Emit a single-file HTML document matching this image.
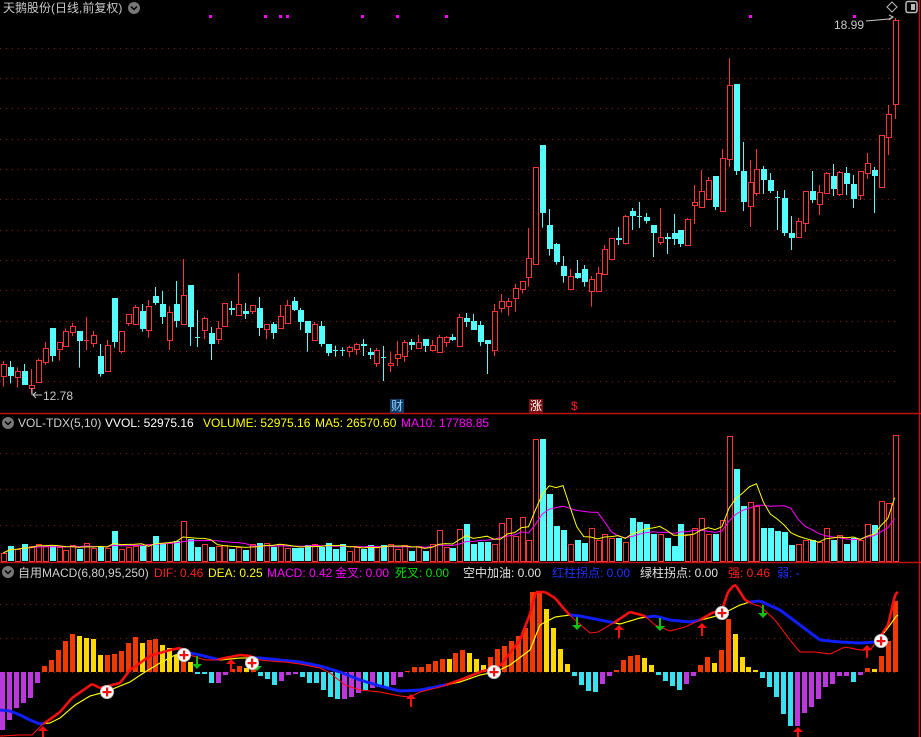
<!DOCTYPE html>
<html><head><meta charset="utf-8">
<style>
html,body{margin:0;padding:0;background:#000;width:921px;height:737px;overflow:hidden}
body{position:relative;font-family:"Liberation Sans","Noto Sans CJK SC",sans-serif;font-size:12px}
svg{position:absolute;left:0;top:0}
.t{position:absolute;white-space:nowrap;line-height:14px;font-size:12px}
</style></head><body>
<svg id="s" width="921" height="737" xmlns="http://www.w3.org/2000/svg"></svg>
<div class="t" style="left:3px;top:1px;color:#c8c8c8;font-size:12px">天鹅股份(日线,前复权)</div>
<div class="t" style="left:834px;top:18px;color:#c8c8c8">18.99</div>
<div class="t" style="left:43px;top:389px;color:#c8c8c8">12.78</div>
<div class="t" style="left:18px;top:416px;color:#d0d0d0">VOL-TDX(5,10)</div>
<div class="t" style="left:105px;top:416px;color:#fff">VVOL: 52975.16</div>
<div class="t" style="left:203px;top:416px;color:#ffff00">VOLUME: 52975.16</div>
<div class="t" style="left:315px;top:416px;color:#ffff00">MA5: 26570.60</div>
<div class="t" style="left:401px;top:416px;color:#ff00ff">MA10: 17788.85</div>
<div class="t" style="left:18px;top:566px;color:#d0d0d0">自用MACD(6,80,95,250)</div>
<div class="t" style="left:154px;top:566px;color:#ff2020">DIF: 0.46</div>
<div class="t" style="left:208px;top:566px;color:#ffff00">DEA: 0.25</div>
<div class="t" style="left:267px;top:566px;color:#ff00ff">MACD: 0.42</div>
<div class="t" style="left:335px;top:566px;color:#ff00ff">金叉: 0.00</div>
<div class="t" style="left:395px;top:566px;color:#00e000">死叉: 0.00</div>
<div class="t" style="left:463px;top:566px;color:#e0e0e0">空中加油: 0.00</div>
<div class="t" style="left:552px;top:566px;color:#2030ff">红柱拐点: 0.00</div>
<div class="t" style="left:640px;top:566px;color:#e0e0e0">绿柱拐点: 0.00</div>
<div class="t" style="left:728px;top:566px;color:#ff2020">强: 0.46</div>
<div class="t" style="left:777px;top:566px;color:#2030ff">弱: -</div>
<div class="t" style="left:390px;top:399px;color:#8fd0ff;background:#123a66;padding:0 1px">财</div>
<div class="t" style="left:529px;top:399px;color:#fff;background:#7a1010;padding:0 1px">涨</div>
<div class="t" style="left:571px;top:399px;color:#ff2020">$</div>
<script>
var S=document.getElementById('s'),o='';
function L(x1,y1,x2,y2,c,w,d){o+='<line x1="'+x1+'" y1="'+y1+'" x2="'+x2+'" y2="'+y2+'" stroke="'+c+'" stroke-width="'+(w||1)+'"'+(d?' stroke-dasharray="'+d+'"':'')+'/>';}
function R(x,y,w,h,f,s){if(h<0)h=0;o+='<rect x="'+x+'" y="'+y+'" width="'+w+'" height="'+h+'" fill="'+f+'"'+(s?' stroke="'+s+'"':'')+'/>';}
[48,78,108,139,169,199,230,260,290,321,351,381].forEach(function(y){L(0,y+.5,897,y+.5,'#8a1a1a',1,'1 5');});
[453,489,525].forEach(function(y){L(0,y+.5,897,y+.5,'#8a1a1a',1,'1 5');});
[604,638,672].forEach(function(y){L(0,y+.5,897,y+.5,'#8a1a1a',1,'1 5');});
L(0,413.5,921,413.5,'#c01010',1.5);L(0,562.5,921,562.5,'#c01010',1.5);L(919.5,0,919.5,737,'#c01010',1.5);
[210,265,280,287,362,397,446,750,854].forEach(function(x){R(x-1,15,3,3,'#ff00ff');});
var A=[['R',342,378,333,410],['C',351,378,333,400],['R',363,381,352,412],['C',363,405,342,405],['R',405,415,357,430],['R',330,397,325,397],['R',295,335,276,345],['C',234,318,234,335],['R',277,296,277,332],['R',243,287,235,287],['R',228,245,219,258],['C',243,272,243,353],['R',270,274,201,300],['R',255,278,243,291],['C',318,372,282,380],['R',286,362,270,362],['C',144,275,144,293],['R',243,302,243,311],['R',192,218,192,228],['R',171,221,165,225],['C',183,237,162,245],['R',168,239,150,263],['C',138,159,111,165],['C',162,200,123,222],['R',186,269,168,300],['C',162,213,93,232],['R',135,221,27,225],['C',105,231,105,288],['C',261,263,180,291],['R',204,239,200,268],['C',249,282,231,330],['R',234,267,213,282],['R',159,227,159,227],['C',175,179,153,195],['R',162,194,69,194],['C',183,191,159,207],['R',166,182,166,192],['C',174,233,141,258],['R',222,236,222,267],['C',222,248,216,267],['R',198,234,165,234],['R',165,218,150,222],['C',153,180,141,183],['C',180,215,174,240],['C',213,248,213,305],['R',222,269,216,269],['C',228,282,213,290],['C',282,309,282,318],['C',299,301,287,320],['C',299,301,292,318],['R',291,302,287,321],['R',282,296,279,315],['C',282,288,267,318],['C',306,315,294,327],['R',300,338,294,351],['C',321,323,288,393],['R',339,344,306,366],['R',312,323,273,348],['R',276,318,270,336],['C',276,285,267,300],['R',276,293,255,293],['C',267,288,267,306],['R',285,299,270,303],['R',261,305,255,305],['R',261,276,258,291],['C',262,269,252,273],['R',201,287,192,287],['C',204,215,189,231],['C',213,240,192,240],['C',225,276,213,288],['C',270,282,270,372]];
var B=[['R',783,900,762,918],['R',753,773,732,788],['R',753,767,744,797],['R',714,743,702,785],['R',693,716,693,731],['R',624,680,534,710],['R',351,641,351,641],['C',285,488,285,533],['C',525,597,477,617],['C',582,635,579,644],['C',648,677,618,698],['R',679,716,657,716],['C',669,684,630,687],['C',657,696,645,710],['R',687,722,678,770],['R',669,722,651,722],['R',597,671,585,671],['R',564,626,564,626],['C',564,570,531,585],['R',498,578,495,584],['C',483,497,474,540],['C',498,500,456,534],['C',501,513,489,521],['C',525,548,525,621],['R',561,575,474,584],['C',561,567,549,612],['C',549,567,492,585],['C',540,582,540,591],['R',507,584,504,584],['R',456,464,405,522],['R',423,470,360,473],['R',390,446,381,446],['C',378,470,378,480],['R',324,482,297,482],['R',105,326,24,351],['C',102,362,102,375],['C',363,455,276,483],['R',396,467,330,531],['R',357,428,297,438],['C',357,390,348,432],['C',390,423,369,429],['C',441,443,423,540],['C',444,549,420,558],['C',549,564,498,600],['R',513,560,504,560],['R',423,518,423,546],['C',423,450,363,459],['R',426,461,405,495],['R',369,428,366,428],['C',378,417,342,438],['R',366,431,363,438],['C',369,402,351,435],['C',402,447,375,474],['R',363,434,363,450],['R',339,368,309,387],['C',360,378,351,489],['R',255,410,255,410],['R',192,260,165,315],['R',-90,161,-96,207]];
var K=[];A.forEach(function(a){K.push([a[0],250+a[1]/3,250+a[2]/3,250+a[3]/3,250+a[4]/3]);});
B.forEach(function(a){K.push([a[0],50+a[1]/3,50+a[2]/3,50+a[3]/3,50+a[4]/3]);});
var RC='#ff3434',CC='#54fcfc';
function cx(i){return 3.3+6.91*i;}
K.forEach(function(k,i){var x=Math.round(cx(i)),c=k[0]=='R'?RC:CC;var t=Math.round(k[1]),b=Math.round(k[2]);
L(x+.5,k[3],x+.5,t,c);L(x+.5,b,x+.5,k[4],c);
if(b-t<2){L(x-2,t+.5,x+3,t+.5,c);}else if(k[0]=='R'){R(x-1.5,t+.5,5,b-t,'#000',c);}else{R(x-2,t,6,b-t,c);}});
o+='<polyline points="866,21 889,19 893,17" fill="none" stroke="#c8c8c8"/><polyline points="889,15 893,17 889,20" fill="none" stroke="#c8c8c8"/>';
o+='<line x1="33" y1="395" x2="42" y2="395" stroke="#c8c8c8"/><polyline points="36,392 33,395 36,398" fill="none" stroke="#c8c8c8"/><line x1="32" y1="388" x2="32" y2="395" stroke="#c8c8c8"/>';
o+='<circle cx="134" cy="8" r="6" fill="#777"/><polyline points="131,6.5 134,9.5 137,6.5" fill="none" stroke="#000" stroke-width="1.5"/>';
o+='<circle cx="8" cy="423" r="6" fill="#777"/><polyline points="5,421.5 8,424.5 11,421.5" fill="none" stroke="#000" stroke-width="1.5"/>';
o+='<circle cx="8" cy="572" r="6" fill="#777"/><polyline points="5,570.5 8,573.5 11,570.5" fill="none" stroke="#000" stroke-width="1.5"/>';
o+='<polygon points="892,2 897,7 892,12 887,7" fill="none" stroke="#bbb"/><rect x="906" y="1.5" width="11" height="11" rx="2" fill="none" stroke="#bbb" stroke-width="1.5"/><rect x="911" y="4" width="4" height="6" fill="#bbb"/>';
var V=[];for(var i=0;i<K.length;i++){V.push(8+Math.round(6*Math.abs(Math.sin(i*1.7))+4*Math.abs(Math.sin(i*0.37))));}
var ov={7:15,14:14,16:30,22:25,25:20,26:40,24:18,27:22,30:14,37:18,44:16,54:14,57:12};for(var kk in ov)V[kk]=ov[kk];
var Z=[[440,31],[446,14],[453,13],[460,32],[466,37],[473,17],[480,19],[487,19],[494,17],[501,38],[508,43],[515,25],[522,44],[529,21],[536,122],[543,122],[549,67],[556,35],[563,31],[570,17],[577,21],[584,18],[591,33],[598,21],[605,27],[612,23],[619,23],[626,19],[632,43],[639,39],[646,37],[653,27],[660,27],[667,23],[674,15],[681,37],[688,27],[695,33],[702,43],[709,27],[715,27],[722,41],[729,125],[736,92],[743,55],[750,59],[757,55],[764,33],[771,33],[778,30],[785,29],[792,16],[798,17],[805,21],[812,21],[819,19],[826,33],[833,21],[840,26],[847,17],[854,23],[861,21],[868,37],[875,36],[881,60],[888,58],[895,126]];
Z.forEach(function(z){var i=Math.round((z[0]-3.3)/6.91);if(i>=K.length)i=K.length-1;V[i]=z[1];});
V.forEach(function(h,i){var x=Math.round(cx(i));if(K[i][0]=='R')R(x-1.5,561.5-h,5,h,'#000',RC);else R(x-2,561-h,6,h,CC);});
function ma(n){var p=[];for(var i=0;i<V.length;i++){var s=0,c=0;for(var j=Math.max(0,i-n+1);j<=i;j++){s+=V[j];c++;}p.push(cx(i).toFixed(1)+','+(561-s/c).toFixed(1));}return p.join(' ');}
o+='<polyline points="'+ma(10)+'" fill="none" stroke="#ff00ff"/><polyline points="'+ma(5)+'" fill="none" stroke="#ffff00"/>';
var M=[[-58,'M'],[-48,'M'],[-36,'M'],[-31,'M'],[-26,'M'],[-11,'M'],[6,'R'],[12,'R'],[22,'R'],[31,'R'],[38,'R'],[36,'Y'],[34,'Y'],[33,'Y'],[17,'Y'],[17,'R'],[18,'R'],[21,'R'],[29,'R'],[35,'R'],[29,'Y'],[32,'R'],[33,'R'],[27,'Y'],[24,'Y'],[17,'Y'],[22,'R'],[10,'Y'],[-2,'C'],[-2,'C'],[-11,'C'],[-11,'M'],[-3,'M'],[3,'R'],[6,'R'],[4,'Y'],[6,'R'],[-4,'C'],[-7,'C'],[-13,'C'],[-9,'M'],[-3,'M'],[-2,'M'],[-5,'C'],[-11,'C'],[-11,'C'],[-18,'C'],[-25,'C'],[-27,'C'],[-27,'M'],[-25,'M'],[-21,'M'],[-18,'C'],[-16,'M'],[-15,'C'],[-16,'C'],[-13,'M'],[-5,'M'],[1,'R'],[5,'R'],[5,'R'],[8,'R'],[11,'R'],[13,'R'],[13,'Y'],[19,'R'],[22,'R'],[19,'Y'],[13,'Y'],[7,'Y'],[15,'R'],[23,'R'],[26,'R'],[31,'R'],[36,'R'],[44,'R'],[80,'R'],[81,'R'],[63,'Y'],[44,'Y'],[23,'Y'],[8,'Y'],[-4,'C'],[-13,'C'],[-19,'C'],[-20,'C'],[-12,'M'],[-4,'M'],[2,'R'],[12,'R'],[16,'R'],[17,'R'],[14,'Y'],[7,'Y'],[-3,'C'],[-9,'C'],[-14,'C'],[-18,'C'],[-12,'M'],[-4,'M'],[7,'R'],[15,'R'],[9,'Y'],[22,'R'],[53,'R'],[38,'Y'],[15,'Y'],[5,'Y'],[2,'Y'],[-6,'C'],[-15,'C'],[-25,'C'],[-42,'C'],[-54,'C'],[-54,'M'],[-41,'M'],[-35,'M'],[-27,'M'],[-15,'M'],[-12,'M'],[-4,'M'],[-4,'M'],[-10,'C'],[-3,'M'],[4,'R'],[3,'Y'],[16,'R'],[31,'R'],[71,'R']];
var MC={R:'#f03a00',Y:'#ffd800',C:'#38e0f0',M:'#bb38dd'},st=893/(M.length-1);
M.forEach(function(m,i){var x=Math.round(i*st),h=m[0];if(h>=0)R(x,672-h,5,h,MC[m[1]]);else R(x,672,5,-h,MC[m[1]]);});
var DIF=[[0,736],[20,735],[32,735],[42,725],[60,712],[72,698],[92,684],[100,688],[120,683],[130,670],[150,656],[170,650],[180,648],[190,655],[205,660],[215,660],[230,657],[240,655],[250,656],[260,660],[270,661],[285,662],[300,664],[320,668],[330,673],[345,685],[360,690],[380,692],[400,696],[410,697],[420,692],[440,687],[460,680],[480,672],[500,666],[520,640],[530,614],[536,592],[545,592],[555,598],[565,610],[575,620],[590,633],[598,632],[615,622],[630,612],[645,616],[655,625],[670,631],[685,627],[700,620],[712,613],[722,610],[728,592],[735,584],[745,600],[755,605],[760,606],[775,620],[790,640],[800,652],[815,652],[830,654],[845,647],[860,650],[870,650],[878,640],[888,625],[895,595],[897,592]];
var DEA=[[0,710],[10,711],[20,715],[30,720],[40,724],[50,723],[60,718],[75,705],[90,696],[105,692],[115,688],[130,682],[145,672],[160,663],[175,655],[185,652],[200,655],[220,660],[240,658],[260,658],[280,660],[300,662],[320,666],[340,672],[360,680],[380,686],[400,691],[420,690],[440,686],[460,682],[480,675],[495,672],[510,665],[530,650],[540,625],[555,617],[570,615],[580,616],[600,620],[620,624],[640,618],[655,616],[670,620],[690,622],[705,619],[720,615],[740,605],[750,602],[760,601],[780,610],[800,625],[820,640],[840,642],[860,643],[875,642],[880,638],[890,625],[897,615]];
function at(P,x){for(var i=1;i<P.length;i++){if(P[i][0]>=x){var a=P[i-1],b=P[i],t=(x-a[0])/((b[0]-a[0])||1);return a[1]+t*(b[1]-a[1]);}}return P[P.length-1][1];}
for(var xx=0;xx<897;xx+=2){var d1=at(DIF,xx),d2=at(DIF,xx+2),e1=at(DEA,xx),e2=at(DEA,xx+2),isUp=(d1+d2)<(e1+e2);
if(isUp){L(xx,e1,xx+2,e2,'#ffff00',1.2);L(xx,d1,xx+2,d2,'#ff1010',2.6);}else{L(xx,e1,xx+2,e2,'#1020ff',3);L(xx,d1,xx+2,d2,'#ff1010',1.1);}}
function arrUp(x,y){o+='<polygon points="'+x+','+(y-7)+' '+(x-5)+','+(y-2)+' '+(x+5)+','+(y-2)+'" fill="#ff1010"/><rect x="'+(x-1)+'" y="'+(y-2)+'" width="2" height="8" fill="#ff1010"/>';}
function arrDn(x,y){o+='<rect x="'+(x-1)+'" y="'+(y-7)+'" width="2" height="8" fill="#10c010"/><polygon points="'+x+','+(y+6)+' '+(x-5)+','+(y+1)+' '+(x+5)+','+(y+1)+'" fill="#10c010"/>';}
try{
[[43,733],[231,666],[411,701],[619,632],[702,630],[867,652],[798,734]].forEach(function(p){arrUp(p[0],p[1]);});
[[197,663],[577,624],[660,625],[763,612],[257,665]].forEach(function(p){arrDn(p[0],p[1]);});
[[107,692],[184,655],[252,663],[494,672],[722,613],[881,641]].forEach(function(p){o+='<circle cx="'+p[0]+'" cy="'+p[1]+'" r="6.5" fill="#fff" stroke="#ccc"/><rect x="'+(p[0]-4.5)+'" y="'+(p[1]-1)+'" width="9" height="2.2" fill="#f01010"/><rect x="'+(p[0]-1)+'" y="'+(p[1]-4.5)+'" width="2.2" height="9" fill="#f01010"/>';});
}finally{S.innerHTML=o;}
</script>
</body></html>
